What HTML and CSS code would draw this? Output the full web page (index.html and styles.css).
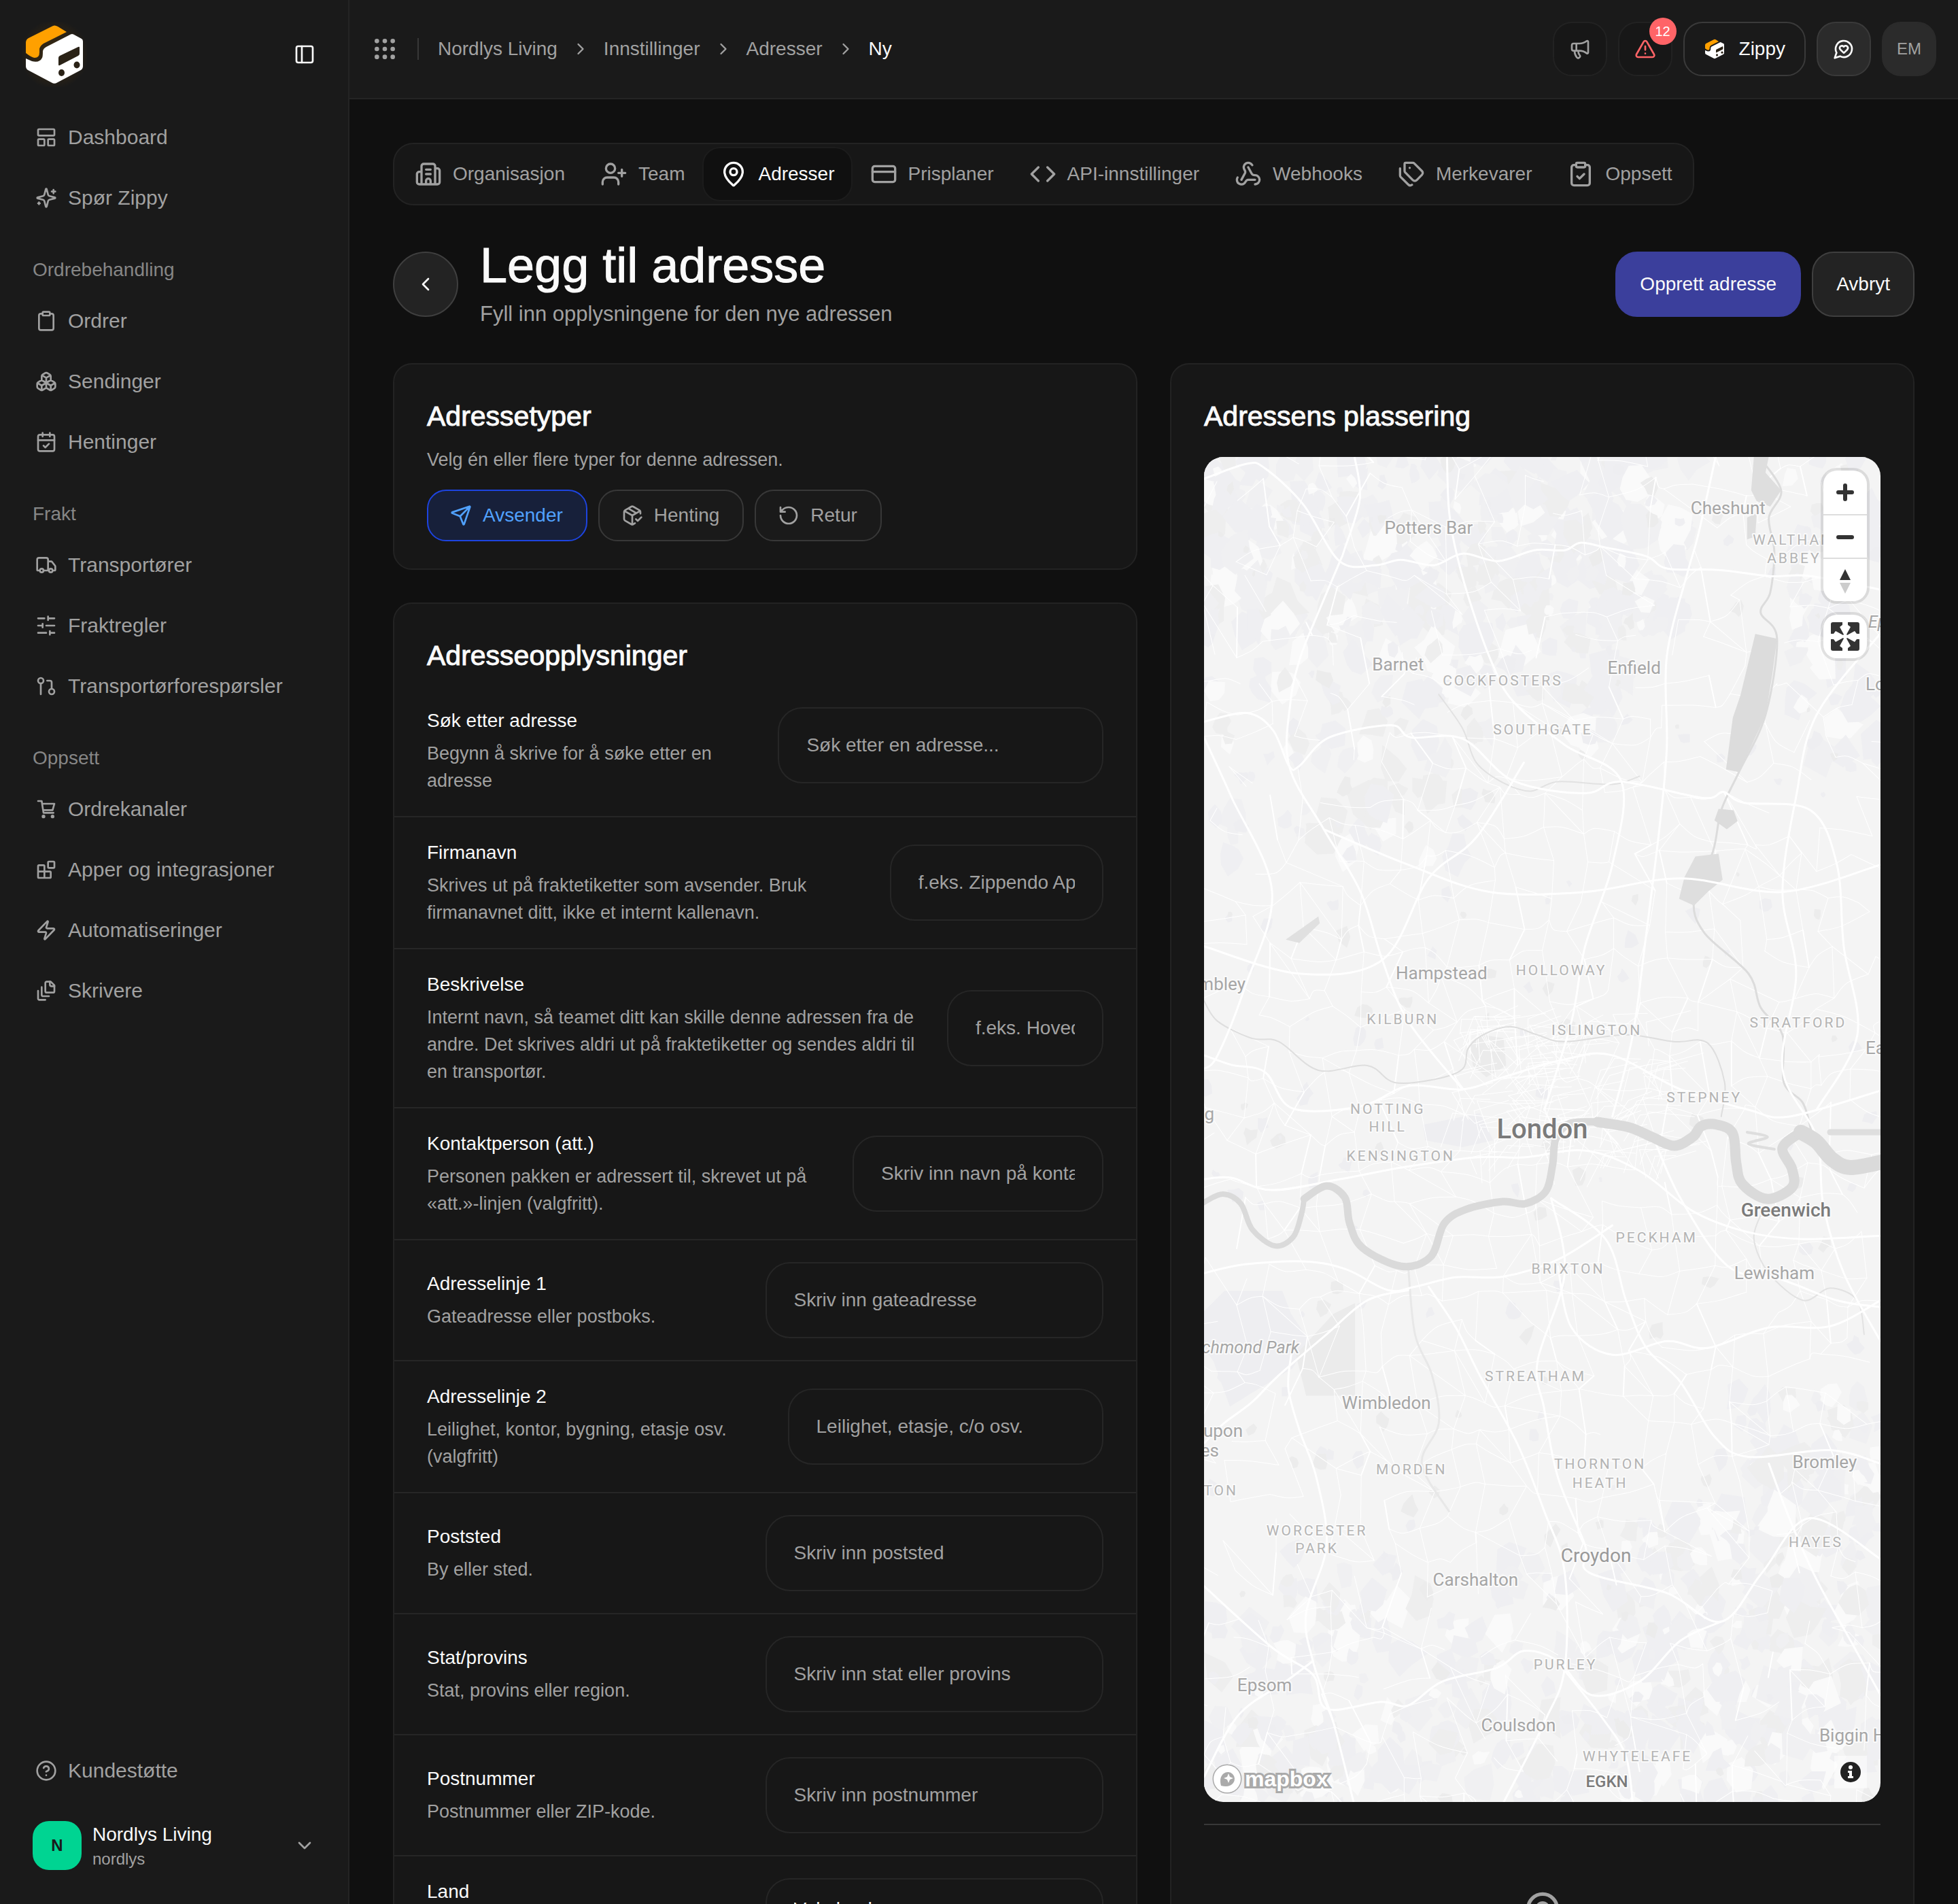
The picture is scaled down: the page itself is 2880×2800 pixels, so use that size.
FILE: index.html
```html
<!DOCTYPE html>
<html lang="nb">
<head>
    <meta charset="UTF-8">
    <meta name="viewport" content="width=device-width, initial-scale=1.0">
    <title>Legg til adresse - Zippendo</title>
    <link rel="stylesheet" href="styles.css">
</head>
<body>
    <svg class="sprite" aria-hidden="true">
        <symbol id="logo" viewBox="-6 -5 96 96">
            <path fill="#ffa000" d="M0 26Q0 21 4 19L38 2Q42-1 47 2L60 10 26 27Q20 31 20 36V40Q20 48 13 48Q9 48 0 41Z"/>
            <path fill="#fff" d="M0 49L9 53Q20 56 24 48Q25 46 25 38 26 34 30 32L66 13.500Q68 12.500 70 13.500L82 20Q84 21 84 24V60Q84 64 81 66L46 84.500Q42 87 38 84.500L3 66Q0 64 0 60Z"/>
            <path fill="#2a2216" d="M48 48Q48 46 50 45L77 32Q79 31 79 33V42Q79 44 77 45L50 59Q48 60 48 58Z"/>
            <ellipse fill="#2a2216" cx="52.500" cy="70" rx="4.500" ry="5"/>
            <ellipse fill="#2a2216" cx="75" cy="58.500" rx="4.500" ry="5"/>
        </symbol>
        <symbol id="i-panel" viewBox="0 0 24 24"><rect x="3" y="3" width="18" height="18" rx="2"/><path d="M9 3v18"/></symbol>
        <symbol id="i-dashboard" viewBox="0 0 24 24"><rect x="3" y="3" width="18" height="7" rx="1"/><rect x="3" y="14" width="7" height="7" rx="1"/><rect x="14" y="14" width="7" height="7" rx="1"/></symbol>
        <symbol id="i-sparkles" viewBox="0 0 24 24"><path d="M9.937 15.500A2 2 0 0 0 8.500 14.063l-6.135-1.582a.5.5 0 0 1 0-.962L8.500 9.936A2 2 0 0 0 9.937 8.500l1.582-6.135a.5.5 0 0 1 .963 0L14.063 8.500A2 2 0 0 0 15.500 9.937l6.135 1.581a.5.5 0 0 1 0 .964L15.500 14.063a2 2 0 0 0-1.437 1.437l-1.582 6.135a.5.5 0 0 1-.963 0z"/><path d="M20 3v4M22 5h-4M4 17v2M5 18H3"/></symbol>
        <symbol id="i-clipboard" viewBox="0 0 24 24"><rect x="8" y="2" width="8" height="4" rx="1"/><path d="M16 4h2a2 2 0 0 1 2 2v14a2 2 0 0 1-2 2H6a2 2 0 0 1-2-2V6a2 2 0 0 1 2-2h2"/></symbol>
        <symbol id="i-clipboard-check" viewBox="0 0 24 24"><rect x="8" y="2" width="8" height="4" rx="1"/><path d="M16 4h2a2 2 0 0 1 2 2v14a2 2 0 0 1-2 2H6a2 2 0 0 1-2-2V6a2 2 0 0 1 2-2h2M9 14l2 2 4-4"/></symbol>
        <symbol id="i-boxes" viewBox="0 0 24 24"><path d="M2.970 12.920A2 2 0 0 0 2 14.630v3.240a2 2 0 0 0 .97 1.710l3 1.800a2 2 0 0 0 2.060 0L12 19v-5.500l-5-3-4.030 2.420ZM7 16.500l-4.740-2.850M7 16.500l5-3M7 16.500v5.170M12 13.500V19l3.970 2.380a2 2 0 0 0 2.060 0l3-1.800a2 2 0 0 0 .97-1.710v-3.240a2 2 0 0 0-.97-1.710L17 10.500l-5 3ZM17 16.500l-5-3M17 16.500l4.740-2.850M17 16.500v5.170M7.970 4.420A2 2 0 0 0 7 6.130v4.370l5 3 5-3V6.130a2 2 0 0 0-.97-1.710l-3-1.800a2 2 0 0 0-2.060 0l-3 1.800ZM12 8L7.260 5.150M12 8l4.740-2.850M12 13.500V8"/></symbol>
        <symbol id="i-calendar" viewBox="0 0 24 24"><path d="M8 2v4M16 2v4M3 10h18M9 16l2 2 4-4"/><rect x="3" y="4" width="18" height="18" rx="2"/></symbol>
        <symbol id="i-truck" viewBox="0 0 24 24"><path d="M14 18V6a2 2 0 0 0-2-2H4a2 2 0 0 0-2 2v11a1 1 0 0 0 1 1h2M15 18H9M19 18h2a1 1 0 0 0 1-1v-3.650a1 1 0 0 0-.22-.624l-3.480-4.350A1 1 0 0 0 17.520 8H14"/><circle cx="17" cy="18" r="2"/><circle cx="7" cy="18" r="2"/></symbol>
        <symbol id="i-sliders" viewBox="0 0 24 24"><path d="M21 4h-7M10 4H3M21 12h-9M8 12H3M21 20h-5M12 20H3M14 2v4M8 10v4M16 18v4"/></symbol>
        <symbol id="i-request" viewBox="0 0 24 24"><circle cx="18" cy="18" r="3"/><circle cx="6" cy="6" r="3"/><path d="M13 6h3a2 2 0 0 1 2 2v7M6 9v12"/></symbol>
        <symbol id="i-cart" viewBox="0 0 24 24"><path d="M3 3h4l2 13h11M7.500 6H21l-2 7H8.500"/><circle cx="9" cy="20" r="1"/><circle cx="19" cy="20" r="1"/></symbol>
        <symbol id="i-blocks" viewBox="0 0 24 24"><rect x="14" y="3" width="7" height="7" rx="1"/><path d="M10 21V8a1 1 0 0 0-1-1H4a1 1 0 0 0-1 1v12a1 1 0 0 0 1 1h12a1 1 0 0 0 1-1v-5a1 1 0 0 0-1-1H3"/></symbol>
        <symbol id="i-zap" viewBox="0 0 24 24"><path d="M4 14a1 1 0 0 1-.78-1.630l9.900-10.200a.5.5 0 0 1 .86.46l-1.920 6.020A1 1 0 0 0 13 10h7a1 1 0 0 1 .78 1.630l-9.900 10.200a.5.5 0 0 1-.86-.46l1.920-6.020A1 1 0 0 0 11 14z"/></symbol>
        <symbol id="i-files" viewBox="0 0 24 24"><path d="M21 7h-3a2 2 0 0 1-2-2V2"/><path d="M21 6v6.500c0 .8-.7 1.500-1.500 1.500h-7c-.8 0-1.500-.7-1.500-1.500v-9c0-.8.7-1.500 1.500-1.500H17ZM7 8v8.800c0 .3.2.6.4.8.2.2.5.4.8.4H15M3 12v8.800c0 .3.2.6.4.8.2.2.5.4.8.4H11"/></symbol>
        <symbol id="i-help" viewBox="0 0 24 24"><circle cx="12" cy="12" r="10"/><path d="M9.090 9a3 3 0 0 1 5.830 1c0 2-3 3-3 3M12 17h.01"/></symbol>
        <symbol id="i-down" viewBox="0 0 24 24"><path d="M6 9l6 6 6-6"/></symbol>
        <symbol id="i-right" viewBox="0 0 24 24"><path d="M9 18l6-6-6-6"/></symbol>
        <symbol id="i-left" viewBox="0 0 24 24"><path d="M15 18l-6-6 6-6"/></symbol>
        <symbol id="i-grip" viewBox="0 0 24 24"><circle cx="5" cy="5" r="1"/><circle cx="12" cy="5" r="1"/><circle cx="19" cy="5" r="1"/><circle cx="5" cy="12" r="1"/><circle cx="12" cy="12" r="1"/><circle cx="19" cy="12" r="1"/><circle cx="5" cy="19" r="1"/><circle cx="12" cy="19" r="1"/><circle cx="19" cy="19" r="1"/></symbol>
        <symbol id="i-megaphone" viewBox="0 0 24 24"><path d="M11 6a13 13 0 0 0 8.400-2.800A1 1 0 0 1 21 4v12a1 1 0 0 1-1.600.8A13 13 0 0 0 11 14H5a2 2 0 0 1-2-2V8a2 2 0 0 1 2-2zM6 14a12 12 0 0 0 2.400 7.200 2 2 0 0 0 3.200-2.400A8 8 0 0 1 10 14M8 6v8"/></symbol>
        <symbol id="i-alert" viewBox="0 0 24 24"><path d="M21.730 18l-8-14a2 2 0 0 0-3.480 0l-8 14A2 2 0 0 0 4 21h16a2 2 0 0 0 1.730-3M12 9v4M12 17h.01"/></symbol>
        <symbol id="i-chat" viewBox="0 0 24 24"><path d="M7.900 20A9 9 0 1 0 4 16.100L2 22Z"/><path d="M15.800 9.200a2.500 2.500 0 0 0-3.500 0l-.3.400-.35-.3a2.420 2.420 0 1 0-3.200 3.600l3.600 3.500 3.600-3.500c1.200-1.200 1.100-2.700.2-3.700"/></symbol>
        <symbol id="i-building" viewBox="0 0 24 24"><path d="M10 12h4M10 8h4M14 21v-3a2 2 0 0 0-4 0v3M6 10H4a2 2 0 0 0-2 2v7a2 2 0 0 0 2 2h16a2 2 0 0 0 2-2V9a2 2 0 0 0-2-2h-2M6 21V5a2 2 0 0 1 2-2h8a2 2 0 0 1 2 2v16"/></symbol>
        <symbol id="i-user-plus" viewBox="0 0 24 24"><path d="M16 21v-2a4 4 0 0 0-4-4H6a4 4 0 0 0-4 4v2M19 8v6M22 11h-6"/><circle cx="9" cy="7" r="4"/></symbol>
        <symbol id="i-pin" viewBox="0 0 24 24"><path d="M20 10c0 4.993-5.539 10.193-7.399 11.799a1 1 0 0 1-1.202 0C9.539 20.193 4 14.993 4 10a8 8 0 0 1 16 0"/><circle cx="12" cy="10" r="3"/></symbol>
        <symbol id="i-card" viewBox="0 0 24 24"><rect x="2" y="5" width="20" height="14" rx="2"/><path d="M2 10h20"/></symbol>
        <symbol id="i-code" viewBox="0 0 24 24"><path d="M16 18l6-6-6-6M8 6l-6 6 6 6"/></symbol>
        <symbol id="i-webhook" viewBox="0 0 24 24"><path d="M18 16.980h-5.990c-1.100 0-1.950.94-2.480 1.900A4 4 0 0 1 2 17c.01-.7.2-1.400.57-2"/><path d="M6 17l3.130-5.780c.53-.97.1-2.180-.5-3.100a4 4 0 1 1 6.890-4.060"/><path d="M12 6l3.130 5.730C15.660 12.700 16.900 13 18 13a4 4 0 0 1 0 8"/></symbol>
        <symbol id="i-tags" viewBox="0 0 24 24"><path d="M13.172 2a2 2 0 0 1 1.414.586l6.710 6.710a2.400 2.400 0 0 1 0 3.408l-4.592 4.592a2.400 2.400 0 0 1-3.408 0l-6.710-6.710A2 2 0 0 1 6 9.172V3a1 1 0 0 1 1-1z"/><path d="M2 7v6.172a2 2 0 0 0 .586 1.414l6.710 6.710a2.400 2.400 0 0 0 3.191.193M10.500 6.500h.01"/></symbol>
        <symbol id="i-send" viewBox="0 0 24 24"><path d="M14.536 21.686a.5.5 0 0 0 .937-.024l6.500-19a.496.496 0 0 0-.635-.635l-19 6.500a.5.5 0 0 0-.024.937l7.930 3.180a2 2 0 0 1 1.112 1.110zM21.854 2.147l-10.940 10.939"/></symbol>
        <symbol id="i-package" viewBox="0 0 24 24"><path d="M16 16l2 2 4-4M21 10V8a2 2 0 0 0-1-1.730l-7-4a2 2 0 0 0-2 0l-7 4A2 2 0 0 0 3 8v8a2 2 0 0 0 1 1.730l7 4a2 2 0 0 0 2 0l2-1.140M7.500 4.270l9 5.150M3.290 7L12 12l8.710-5M12 22V12"/></symbol>
        <symbol id="i-return" viewBox="0 0 24 24"><path d="M3 12a9 9 0 1 0 9-9 9.750 9.750 0 0 0-6.740 2.740L3 8M3 3v5h5"/></symbol>
    </svg>

    <div class="app">
        <aside class="sidebar">
            <div class="sidebar-head">
                <svg class="brand"><use href="#logo"/></svg>
                <button class="toggle" aria-label="Skjul sidemeny"><svg class="icon"><use href="#i-panel"/></svg></button>
            </div>
            <nav class="nav">
                <div class="nav-group">
                    <a href="#"><svg class="icon"><use href="#i-dashboard"/></svg>Dashboard</a>
                    <a href="#"><svg class="icon"><use href="#i-sparkles"/></svg>Spør Zippy</a>
                </div>
                <div class="nav-group">
                    <h2>Ordrebehandling</h2>
                    <a href="#"><svg class="icon"><use href="#i-clipboard"/></svg>Ordrer</a>
                    <a href="#"><svg class="icon"><use href="#i-boxes"/></svg>Sendinger</a>
                    <a href="#"><svg class="icon"><use href="#i-calendar"/></svg>Hentinger</a>
                </div>
                <div class="nav-group">
                    <h2>Frakt</h2>
                    <a href="#"><svg class="icon"><use href="#i-truck"/></svg>Transportører</a>
                    <a href="#"><svg class="icon"><use href="#i-sliders"/></svg>Fraktregler</a>
                    <a href="#"><svg class="icon"><use href="#i-request"/></svg>Transportørforespørsler</a>
                </div>
                <div class="nav-group">
                    <h2>Oppsett</h2>
                    <a href="#"><svg class="icon"><use href="#i-cart"/></svg>Ordrekanaler</a>
                    <a href="#"><svg class="icon"><use href="#i-blocks"/></svg>Apper og integrasjoner</a>
                    <a href="#"><svg class="icon"><use href="#i-zap"/></svg>Automatiseringer</a>
                    <a href="#"><svg class="icon"><use href="#i-files"/></svg>Skrivere</a>
                </div>
            </nav>
            <div class="sidebar-foot">
                <div class="nav-group">
                    <a href="#"><svg class="icon"><use href="#i-help"/></svg>Kundestøtte</a>
                </div>
                <button class="account">
                    <span class="account-badge">N</span>
                    <span class="account-text">
                        <span class="account-name">Nordlys Living</span>
                        <span class="account-slug">nordlys</span>
                    </span>
                    <svg class="icon"><use href="#i-down"/></svg>
                </button>
            </div>
        </aside>

        <div class="main">
            <header class="topbar">
                <button class="apps" aria-label="Apper"><svg class="icon icon-lg"><use href="#i-grip"/></svg></button>
                <span class="divider"></span>
                <nav class="crumbs" aria-label="Brødsmuler">
                    <a href="#">Nordlys Living</a>
                    <svg class="icon icon-sm"><use href="#i-right"/></svg>
                    <a href="#">Innstillinger</a>
                    <svg class="icon icon-sm"><use href="#i-right"/></svg>
                    <a href="#">Adresser</a>
                    <svg class="icon icon-sm"><use href="#i-right"/></svg>
                    <span class="current">Ny</span>
                </nav>
                <div class="tools">
                    <button class="tool" aria-label="Nyheter"><svg class="icon"><use href="#i-megaphone"/></svg></button>
                    <button class="tool tool-alert" aria-label="Varsler"><svg class="icon"><use href="#i-alert"/></svg><span class="badge">12</span></button>
                    <button class="tool tool-zippy"><svg class="mini-logo"><use href="#logo"/></svg>Zippy</button>
                    <button class="tool tool-chat" aria-label="Tilbakemelding"><svg class="icon"><use href="#i-chat"/></svg></button>
                    <button class="tool tool-user">EM</button>
                </div>
            </header>

            <main class="content">
                <nav class="tabs" aria-label="Innstillinger">
                    <a href="#"><svg class="icon icon-lg"><use href="#i-building"/></svg>Organisasjon</a>
                    <a href="#"><svg class="icon icon-lg"><use href="#i-user-plus"/></svg>Team</a>
                    <a href="#" class="active"><svg class="icon icon-lg"><use href="#i-pin"/></svg>Adresser</a>
                    <a href="#"><svg class="icon icon-lg"><use href="#i-card"/></svg>Prisplaner</a>
                    <a href="#"><svg class="icon icon-lg"><use href="#i-code"/></svg>API-innstillinger</a>
                    <a href="#"><svg class="icon icon-lg"><use href="#i-webhook"/></svg>Webhooks</a>
                    <a href="#"><svg class="icon icon-lg"><use href="#i-tags"/></svg>Merkevarer</a>
                    <a href="#"><svg class="icon icon-lg"><use href="#i-clipboard-check"/></svg>Oppsett</a>
                </nav>

                <div class="page-head">
                    <button class="back" aria-label="Tilbake"><svg class="icon"><use href="#i-left"/></svg></button>
                    <div class="page-title">
                        <h1>Legg til adresse</h1>
                        <p>Fyll inn opplysningene for den nye adressen</p>
                    </div>
                    <div class="actions">
                        <button class="btn btn-primary">Opprett adresse</button>
                        <button class="btn">Avbryt</button>
                    </div>
                </div>

                <div class="columns">
                    <div class="column">
                        <section class="card types">
                            <h2>Adressetyper</h2>
                            <p class="hint">Velg én eller flere typer for denne adressen.</p>
                            <div class="chips">
                                <button class="chip selected" aria-pressed="true"><svg class="icon"><use href="#i-send"/></svg>Avsender</button>
                                <button class="chip" aria-pressed="false"><svg class="icon"><use href="#i-package"/></svg>Henting</button>
                                <button class="chip" aria-pressed="false"><svg class="icon"><use href="#i-return"/></svg>Retur</button>
                            </div>
                        </section>

                        <section class="card details">
                            <h2>Adresseopplysninger</h2>
                            <form class="fields">
                                <div class="field field-top">
                                    <div class="field-text">
                                        <label for="search">Søk etter adresse</label>
                                        <p class="hint">Begynn å skrive for å søke etter en adresse</p>
                                    </div>
                                    <div class="control"><input type="text" id="search" placeholder="Søk etter en adresse..."></div>
                                </div>
                                <div class="field">
                                    <div class="field-text">
                                        <label for="company">Firmanavn</label>
                                        <p class="hint">Skrives ut på fraktetiketter som avsender. Bruk firmanavnet ditt, ikke et internt kallenavn.</p>
                                    </div>
                                    <div class="control"><input type="text" id="company" placeholder="f.eks. Zippendo ApS"></div>
                                </div>
                                <div class="field">
                                    <div class="field-text">
                                        <label for="description">Beskrivelse</label>
                                        <p class="hint">Internt navn, så teamet ditt kan skille denne adressen fra de andre. Det skrives aldri ut på fraktetiketter og sendes aldri til en transportør.</p>
                                    </div>
                                    <div class="control"><input type="text" id="description" placeholder="f.eks. Hovedlager"></div>
                                </div>
                                <div class="field">
                                    <div class="field-text">
                                        <label for="contact">Kontaktperson (att.)</label>
                                        <p class="hint">Personen pakken er adressert til, skrevet ut på «att.»-linjen (valgfritt).</p>
                                    </div>
                                    <div class="control"><input type="text" id="contact" placeholder="Skriv inn navn på kontaktperson"></div>
                                </div>
                                <div class="field">
                                    <div class="field-text">
                                        <label for="line1">Adresselinje 1</label>
                                        <p class="hint">Gateadresse eller postboks.</p>
                                    </div>
                                    <div class="control"><input type="text" id="line1" placeholder="Skriv inn gateadresse"></div>
                                </div>
                                <div class="field">
                                    <div class="field-text">
                                        <label for="line2">Adresselinje 2</label>
                                        <p class="hint">Leilighet, kontor, bygning, etasje osv. (valgfritt)</p>
                                    </div>
                                    <div class="control"><input type="text" id="line2" placeholder="Leilighet, etasje, c/o osv."></div>
                                </div>
                                <div class="field">
                                    <div class="field-text">
                                        <label for="city">Poststed</label>
                                        <p class="hint">By eller sted.</p>
                                    </div>
                                    <div class="control"><input type="text" id="city" placeholder="Skriv inn poststed"></div>
                                </div>
                                <div class="field">
                                    <div class="field-text">
                                        <label for="state">Stat/provins</label>
                                        <p class="hint">Stat, provins eller region.</p>
                                    </div>
                                    <div class="control"><input type="text" id="state" placeholder="Skriv inn stat eller provins"></div>
                                </div>
                                <div class="field">
                                    <div class="field-text">
                                        <label for="zip">Postnummer</label>
                                        <p class="hint">Postnummer eller ZIP-kode.</p>
                                    </div>
                                    <div class="control"><input type="text" id="zip" placeholder="Skriv inn postnummer"></div>
                                </div>
                                <div class="field field-top">
                                    <div class="field-text">
                                        <label for="country">Land</label>
                                    </div>
                                    <div class="control"><select id="country"><option>Velg land</option></select></div>
                                </div>
                            </form>
                        </section>
                    </div>

                    <section class="card location">
                        <h2>Adressens plassering</h2>
                        <div class="map">
                            <svg class="map-canvas" viewBox="0 0 994 1978" preserveAspectRatio="xMidYMid slice">
                                <g id="terrain"></g>
                                <g class="town">
                                    <text x="770" y="85">Cheshunt</text>
                                    <text x="330" y="114">Potters Bar</text>
                                    <text x="285" y="315">Barnet</text>
                                    <text x="632" y="320">Enfield</text>
                                    <text x="349" y="768">Hampstead</text>
                                    <text class="end" x="61" y="784">Wembley</text>
                                    <text class="end" x="15" y="975">Ealing</text>
                                    <text x="838" y="1209">Lewisham</text>
                                    <text x="268" y="1400">Wimbledon</text>
                                    <text class="end" x="57" y="1441">Kingston upon</text>
                                    <text class="end" x="22" y="1470">Thames</text>
                                    <text x="912" y="1487">Bromley</text>
                                    <text x="399" y="1659">Carshalton</text>
                                    <text x="89" y="1814">Epsom</text>
                                    <text x="462" y="1873">Coulsdon</text>
                                    <text class="start" x="904" y="1888">Biggin Hill</text>
                                    <text class="start" x="972" y="344">Loughton</text>
                                    <text class="start" x="972" y="878">East Ham</text>
                                </g>
                                <g class="park">
                                    <text class="start" x="976" y="252">Epping</text>
                                    <text class="end" x="140" y="1318">Richmond Park</text>
                                </g>
                                <g class="suburb">
                                    <text x="867" y="130">WALTHAM</text>
                                    <text x="867" y="157">ABBEY</text>
                                    <text x="439" y="337">COCKFOSTERS</text>
                                    <text x="498" y="409">SOUTHGATE</text>
                                    <text x="525" y="762">HOLLOWAY</text>
                                    <text x="292" y="834">KILBURN</text>
                                    <text x="577" y="850">ISLINGTON</text>
                                    <text x="873" y="839">STRATFORD</text>
                                    <text x="735" y="949">STEPNEY</text>
                                    <text x="270" y="966">NOTTING</text>
                                    <text x="270" y="992">HILL</text>
                                    <text x="289" y="1035">KENSINGTON</text>
                                    <text x="665" y="1155">PECKHAM</text>
                                    <text x="535" y="1201">BRIXTON</text>
                                    <text x="487" y="1359">STREATHAM</text>
                                    <text x="305" y="1495">MORDEN</text>
                                    <text x="582" y="1488">THORNTON</text>
                                    <text x="582" y="1515">HEATH</text>
                                    <text class="end" x="50" y="1526">SURBITON</text>
                                    <text x="166" y="1585">WORCESTER</text>
                                    <text x="166" y="1611">PARK</text>
                                    <text x="899" y="1602">HAYES</text>
                                    <text x="531" y="1782">PURLEY</text>
                                    <text x="637" y="1917">WHYTELEAFE</text>
                                </g>
                                <g class="borough">
                                    <text class="mid" x="576" y="1624">Croydon</text>
                                    <text x="855" y="1117">Greenwich</text>
                                    <text class="code" x="592" y="1955">EGKN</text>
                                    <text class="city" x="497" y="1002">London</text>
                                </g>
                            </svg>
                            <div class="map-controls">
                                <div class="map-group">
                                    <button aria-label="Zoom inn"><svg viewBox="0 0 64 64"><path class="bar" d="M32 22v20M22 32h20"/></svg></button>
                                    <button aria-label="Zoom ut"><svg viewBox="0 0 64 64"><path class="bar" d="M22 32h20"/></svg></button>
                                    <button aria-label="Nord opp"><svg viewBox="0 0 64 64"><path d="M32 15l8 16H24z" fill="#333"/><path d="M32 51l8-16H24z" fill="#ccc"/></svg></button>
                                </div>
                                <div class="map-group">
                                    <button aria-label="Fullskjerm"><svg viewBox="0 0 64 64"><g fill="#333"><path d="M11 14q0-3 3-3h14v4l-4 3 6 11-1 1-11-6-3 4h-4z"/><path d="M53 14q0-3-3-3H36v4l4 3-6 11 1 1 11-6 3 4h4z"/><path d="M11 50q0 3 3 3h14v-4l-4-3 6-11-1-1-11 6-3-4h-4z"/><path d="M53 50q0 3-3 3H36v-4l4-3-6-11 1-1 11 6 3-4h4z"/></g></svg></button>
                                </div>
                            </div>
                            <a class="mapbox" href="#">
                                <svg viewBox="0 0 44 44"><circle cx="22" cy="22" r="20" fill="#fff" stroke="#aaa" stroke-width="3"/><path d="M13 32c-2-8-1-14 4-18a10 10 0 0 1 14 14c-4 5-10 6-18 4z" fill="#aaa"/><path d="M24 14l2 5 5 2-5 2-2 5-2-5-5-2 5-2z" fill="#fff"/></svg>
                                <span>mapbox</span>
                            </a>
                            <button class="map-info" aria-label="Kartinformasjon"><svg viewBox="0 0 30 30"><circle cx="15" cy="15" r="15" fill="#222"/><circle cx="15" cy="8" r="3" fill="#fff"/><path d="M11 13h6v8h2v3h-8v-3h2v-5h-2z" fill="#fff"/></svg></button>
                        </div>
                        <hr>
                        <div class="empty"><svg class="icon"><use href="#i-pin"/></svg></div>
                    </section>
                </div>
            </main>
        </div>
    </div>
    <script src="map.js"></script>
</body>
</html>
```
FILE: styles.css
```css
* {
    box-sizing: border-box;
}
body {
    margin: 0;
    background: #101010;
    color: #fafafa;
    font-family: "Liberation Sans", Arial, sans-serif;
    font-size: 28px;
    line-height: 40px;
}
h1, h2, p {
    margin: 0;
    font-weight: normal;
}
a {
    color: inherit;
    text-decoration: none;
}
button, input, select {
    font: inherit;
    color: inherit;
    background: none;
    border: 0;
    padding: 0;
}
button {
    cursor: pointer;
}
.sprite {
    display: none;
}
.icon {
    display: block;
    flex: none;
    width: 32px;
    height: 32px;
    fill: none;
    stroke: currentColor;
    stroke-width: 2;
    stroke-linecap: round;
    stroke-linejoin: round;
}
.icon-sm {
    width: 28px;
    height: 28px;
}
.icon-lg {
    width: 40px;
    height: 40px;
}
.app {
    display: flex;
    height: 100vh;
    overflow: hidden;
}

/* sidebar */
.sidebar {
    flex: none;
    display: flex;
    flex-direction: column;
    width: 514px;
    background: #1a1a1a;
    border-right: 2px solid #242424;
}
.sidebar-head {
    display: flex;
    align-items: center;
    justify-content: space-between;
    padding: 32px 48px 30px 32px;
}
.brand {
    width: 96px;
    height: 96px;
    background: radial-gradient(circle, #3a2a10, #2a2216 50%, #1a1a1a 75%);
}
.nav {
    flex: 1;
    display: flex;
    flex-direction: column;
    gap: 31px;
}
.nav-group {
    display: flex;
    flex-direction: column;
    gap: 1px;
    padding: 0 32px;
    color: #a1a1a1;
}
.nav-group h2 {
    height: 61px;
    padding-left: 16px;
    font-size: 28px;
    line-height: 61px;
    color: #868686;
}
.nav-group a {
    display: flex;
    align-items: center;
    gap: 16px;
    height: 88px;
    padding: 0 20px;
    font-size: 30px;
}
.sidebar-foot {
    padding-bottom: 50px;
}
.account {
    display: flex;
    align-items: center;
    gap: 16px;
    width: 100%;
    padding: 30px 48px 0;
    text-align: left;
}
.account-badge {
    width: 72px;
    height: 72px;
    border-radius: 24px;
    background: #00d492;
    color: #1a1a1a;
    font-size: 24px;
    font-weight: bold;
    line-height: 72px;
    text-align: center;
}
.account-text {
    flex: 1;
    display: flex;
    flex-direction: column;
}
.account-slug {
    font-size: 24px;
    line-height: 32px;
    color: #a1a1a1;
}
.account .icon {
    color: #a1a1a1;
}

/* top bar */
.main {
    flex: 1;
    min-width: 0;
    display: flex;
    flex-direction: column;
}
.topbar {
    flex: none;
    display: flex;
    align-items: center;
    gap: 28px;
    padding: 32px;
    background: #1a1a1a;
    border-bottom: 2px solid #242424;
}
.apps {
    color: #a1a1a1;
}
.divider {
    width: 2px;
    height: 32px;
    background: #383838;
}
.crumbs {
    flex: 1;
    display: flex;
    align-items: center;
    gap: 20px;
    color: #a1a1a1;
}
.crumbs .current {
    color: #fafafa;
}
.tools {
    display: flex;
    gap: 16px;
}
.tool {
    position: relative;
    display: flex;
    align-items: center;
    justify-content: center;
    min-width: 80px;
    height: 80px;
    border: 2px solid #222;
    border-radius: 28px;
    background: #171717;
    color: #a1a1a1;
}
.tool-alert {
    color: #ff6467;
}
.badge {
    position: absolute;
    top: -8px;
    right: -8px;
    width: 40px;
    height: 40px;
    border-radius: 50%;
    background: #ff6467;
    color: #fff;
    font-size: 20px;
}
.tool-zippy {
    gap: 20px;
    padding: 0 28px;
    background: #1a1a1a;
    border-color: #3a3a3a;
    color: #fafafa;
}
.mini-logo {
    width: 32px;
    height: 32px;
}
.tool-chat {
    background: #2b2b2b;
    border-color: #3a3a3a;
    color: #fafafa;
}
.tool-user {
    background: #2b2b2b;
    border-color: #2b2b2b;
    font-size: 24px;
}

/* page */
.content {
    flex: 1;
    min-height: 0;
    padding: 64px;
    overflow: hidden;
}
.tabs {
    display: flex;
    width: fit-content;
    padding: 4px;
    border: 2px solid #232323;
    border-radius: 30px;
    background: #171717;
    color: #a1a1a1;
}
.tabs a {
    display: flex;
    align-items: center;
    gap: 16px;
    height: 80px;
    padding: 0 24px;
    border: 2px solid transparent;
    border-radius: 26px;
}
.tabs .active {
    background: #101010;
    border-color: #1c1c1c;
    color: #fafafa;
}
.page-head {
    display: flex;
    align-items: center;
    gap: 32px;
    margin: 48px 0;
}
.back {
    display: flex;
    align-items: center;
    justify-content: center;
    width: 96px;
    height: 96px;
    border: 2px solid #3f3f3f;
    border-radius: 50%;
    background: #232323;
}
.page-title {
    flex: 1;
}
.page-title h1 {
    font-size: 72px;
    line-height: 80px;
    -webkit-text-stroke: 1px currentColor;
}
.page-title p {
    margin-top: 8px;
    font-size: 31px;
    line-height: 48px;
    color: #a1a1a1;
}
.actions {
    display: flex;
    gap: 16px;
}
.btn {
    height: 96px;
    padding: 0 34px;
    border: 2px solid #3f3f3f;
    border-radius: 32px;
    background: #232323;
}
.btn-primary {
    background: #3b3f9c;
    border-color: #3b3f9c;
}
.columns {
    display: grid;
    grid-template-columns: 1fr 1fr;
    gap: 48px;
}
.column {
    display: flex;
    flex-direction: column;
    gap: 48px;
    min-width: 0;
}
.card {
    padding: 48px 48px 40px;
    border: 2px solid #232323;
    border-radius: 28px;
    background: #171717;
}
.card h2 {
    font-size: 41px;
    line-height: 56px;
    -webkit-text-stroke: 1px currentColor;
}
.hint {
    font-size: 27px;
    color: #a1a1a1;
}
.types .hint {
    margin: 16px 0 24px;
}
.chips {
    display: flex;
    gap: 16px;
}
.chip {
    display: flex;
    align-items: center;
    gap: 16px;
    height: 76px;
    padding: 0 34px 0 32px;
    border: 2px solid #383838;
    border-radius: 28px;
    background: #1a1a1a;
    color: #a1a1a1;
}
.chip.selected {
    border-color: #1d44e0;
    background: #17203a;
    color: #51a2ff;
}

/* form rows */
.details {
    padding: 48px 0;
}
.details h2 {
    padding: 0 48px;
    margin-bottom: 16px;
}
.field {
    display: flex;
    align-items: center;
    padding: 32px 48px;
    border-bottom: 2px solid #262626;
}
.field-top {
    align-items: flex-start;
}
.field-text {
    flex: 0 1 auto;
    min-width: 0;
    margin-right: auto;
    padding-right: 14px;
}
.field label {
    display: block;
    margin-bottom: 8px;
}
.control {
    flex: 0 1 50%;
    min-width: 0;
}
.control input, .control select {
    display: block;
    width: 100%;
    height: 112px;
    padding: 0 40px;
    border: 2px solid #262626;
    border-radius: 36px;
    background: #171717;
}
.control select {
    height: 92px;
    appearance: none;
}
.control input::placeholder {
    color: #a1a1a1;
    opacity: 1;
}

/* map */
.map {
    position: relative;
    height: 1978px;
    margin-top: 32px;
    border-radius: 28px;
    background: #f4f4f4;
    overflow: hidden;
}
.map-canvas {
    display: block;
    width: 100%;
    height: 100%;
    font-family: Roboto, sans-serif;
}
.map-canvas text {
    text-anchor: middle;
    paint-order: stroke;
    stroke: #fafafa;
    stroke-width: 4px;
    stroke-linejoin: round;
}
.map-canvas .start {
    text-anchor: start;
}
.map-canvas .end {
    text-anchor: end;
}
.town {
    font-size: 26px;
    fill: #a6a6a6;
}
.park {
    font-size: 25px;
    font-style: italic;
    fill: #a6a6a6;
}
.suburb {
    font-size: 21px;
    letter-spacing: 3px;
    fill: #b4b4b4;
}
.borough {
    font-size: 28px;
    font-weight: 500;
    fill: #7a7a7a;
}
.borough .mid {
    font-weight: 400;
    fill: #999;
}
.borough .code {
    font-size: 24px;
}
.borough .city {
    font-size: 40px;
}
.map-controls {
    position: absolute;
    top: 20px;
    right: 20px;
    display: flex;
    flex-direction: column;
    gap: 20px;
}
.map-group {
    border-radius: 20px;
    background: #fff;
    box-shadow: 0 0 0 4px rgba(0, 0, 0, 0.1);
    overflow: hidden;
}
.map-group button {
    display: block;
    width: 64px;
    height: 64px;
}
.map-group button + button {
    border-top: 2px solid #ddd;
}
.map-group svg {
    display: block;
    width: 64px;
}
.bar {
    stroke: #333;
    stroke-width: 6;
    stroke-linecap: round;
}
.mapbox {
    position: absolute;
    bottom: 12px;
    left: 12px;
    display: flex;
    align-items: center;
    gap: 4px;
    color: #fff;
    font-size: 32px;
    font-weight: bold;
    -webkit-text-stroke: 6px #aaa;
    paint-order: stroke;
}
.mapbox svg {
    width: 44px;
    height: 44px;
}
.map-info {
    position: absolute;
    right: 20px;
    bottom: 20px;
    display: flex;
    align-items: center;
    justify-content: center;
    width: 48px;
    height: 48px;
    background: rgba(255, 255, 255, 0.5);
}
.map-info svg {
    width: 30px;
    height: 30px;
}
.location hr {
    height: 2px;
    margin: 32px 0 96px;
    border: 0;
    background: #383838;
}
.empty {
    display: flex;
    justify-content: center;
    color: #a1a1a1;
}
.empty .icon {
    width: 64px;
    height: 64px;
}
```
FILE: map.js
```js
// Draws the base layer of the map: fields, parks, roads and water
const terrain = document.getElementById('terrain');
let seed = 7;

function random() {
    seed = (seed * 16807) % 2147483647;
    return seed / 2147483647;
}

function between(a, b) {
    return a + random() * (b - a);
}

function smooth(points) {
    let d = `M${points[0][0]} ${points[0][1]}`;
    for (let i = 0; i < points.length - 1; i++) {
        const p0 = points[i - 1] || points[i];
        const p1 = points[i];
        const p2 = points[i + 1];
        const p3 = points[i + 2] || p2;
        d += `C${p1[0] + (p2[0] - p0[0]) / 6} ${p1[1] + (p2[1] - p0[1]) / 6} ${p2[0] - (p3[0] - p1[0]) / 6} ${p2[1] - (p3[1] - p1[1]) / 6} ${p2[0]} ${p2[1]}`;
    }
    return d;
}

function add(d, attrs) {
    const path = document.createElementNS('http://www.w3.org/2000/svg', 'path');
    path.setAttribute('d', d);
    path.setAttribute('fill', 'none');
    path.setAttribute('stroke-linejoin', 'round');
    path.setAttribute('stroke-linecap', 'round');
    for (const key in attrs) path.setAttribute(key, attrs[key]);
    terrain.appendChild(path);
}

function line(points, color, width) {
    add(smooth(points), { stroke: color, 'stroke-width': width });
}

function area(points, color) {
    add('M' + points.join('L') + 'Z', { fill: color });
}

function patch(x, y, size, color) {
    const n = 5 + Math.floor(random() * 5);
    const turn = random() * 6;
    const points = [];
    for (let i = 0; i < n; i++) {
        const a = turn + i / n * Math.PI * 2;
        const r = size * between(0.4, 1);
        points.push([Math.round(x + Math.cos(a) * r), Math.round(y + Math.sin(a) * r * 1.2)]);
    }
    area(points, color);
}

// countryside in the north and south, x, y, width, height, count
const fields = [
    [0, 0, 720, 260, 300], [0, 240, 620, 180, 90], [0, 420, 380, 180, 40],
    [860, 0, 134, 460, 70], [600, 1560, 394, 418, 230], [0, 1700, 600, 278, 160],
    [780, 1380, 214, 200, 50], [100, 1600, 500, 120, 30]
];
for (const [x, y, w, h, count] of fields) {
    for (let i = 0; i < count; i++) {
        const color = ['#efeff2', '#fafafa', '#efeff2', '#eeeeee', '#f0f0f2'][Math.floor(random() * 5)];
        patch(x + random() * w, y + random() * h, between(8, 36), color);
    }
}
for (let i = 0; i < 220; i++) {
    patch(random() * 994, random() * 1978, between(4, 17), random() < 0.6 ? '#eeeef1' : '#ececec');
}

// Richmond Park, Wimbledon Common, Hyde Park, Regent's Park
area([[0, 1256], [30, 1226], [115, 1226], [128, 1260], [155, 1300], [130, 1340], [80, 1370], [38, 1396], [14, 1330], [0, 1310]], '#eeeef1');
area([[190, 1260], [222, 1244], [222, 1380], [150, 1380], [135, 1320]], '#ebebeb');
area([[322, 982], [405, 965], [425, 1005], [380, 1015], [325, 1005]], '#eeeef1');
area([[390, 865], [410, 850], [440, 855], [444, 895], [415, 912], [395, 895]], '#ebebeb');

// minor streets follow a loose grid, each node moved a little
const step = 46;
const nodes = [];
for (let y = -1; y * step < 2030; y++) {
    nodes.push([]);
    for (let x = -1; x * step < 1050; x++) {
        nodes[y + 1].push([Math.round(x * step + between(-21, 21)), Math.round(y * step + between(-21, 21))]);
    }
}
for (let r = 0; r < nodes.length - 1; r++) {
    for (let c = 0; c < nodes[r].length - 1; c++) {
        const [x, y] = nodes[r][c];
        const near = Math.hypot(x - 500, (y - 1000) * 0.7);
        const chance = near < 450 ? 0.85 : 0.5;
        const bend = [(x + nodes[r][c + 1][0]) / 2 + between(-7, 7), (y + nodes[r][c + 1][1]) / 2 + between(-7, 7)];
        if (random() < chance) line([[x, y], bend, nodes[r][c + 1]], '#fff', 1);
        if (random() < chance) line([[x, y], nodes[r + 1][c]], '#fff', random() < 0.2 ? 2 : 1);
        if (random() < 0.15) line([[x, y], nodes[r + 1][c + 1]], '#fff', 1);
    }
}
for (let i = 0; i < 130; i++) {
    const x = between(360, 680);
    const y = between(820, 1040);
    line([[x, y], [x + between(-30, 30), y + between(20, 50)]], '#fff', 1);
    line([[x, y], [x + between(30, 70), y + between(-20, 8)]], '#fff', 1);
}

// River Lea and canals
line([[815, 0], [848, 50], [830, 90], [838, 140], [832, 200], [818, 230], [842, 268], [825, 380], [786, 464], [760, 520], [748, 580], [720, 650], [735, 700], [800, 760], [818, 810], [850, 850], [852, 920], [880, 950], [892, 990]], '#dcdcdc', 3);
line([[0, 800], [20, 830], [70, 855], [110, 860], [168, 902], [240, 895], [280, 920], [340, 915], [380, 900], [388, 870], [410, 850], [450, 838], [490, 850], [530, 860], [620, 850], [690, 860], [740, 862], [765, 920], [760, 970]], '#dedede', 2);
line([[345, 350], [380, 400], [400, 450], [440, 480], [480, 492], [520, 478], [600, 482], [640, 470]], '#e2e2e2', 2);
line([[300, 1190], [310, 1290], [335, 1350], [345, 1420], [320, 1480], [360, 1550]], '#e8e8e8', 3);
line([[820, 1110], [808, 1150], [830, 1200], [880, 1240], [920, 1222], [960, 1240], [970, 1290]], '#e2e2e2', 2);
area([[810, 261], [842, 268], [835, 321], [825, 381], [786, 464], [767, 460], [777, 384], [788, 352]], '#dcdcdc');
area([[808, 0], [830, 0], [825, 24], [848, 50], [832, 74], [812, 66], [804, 50]], '#dedede');
area([[798, 90], [812, 84], [810, 118], [798, 122]], '#dedede');
area([[750, 535], [756, 518], [778, 520], [784, 536], [768, 548]], '#dcdcdc');
area([[722, 588], [756, 584], [762, 622], [740, 640], [720, 660], [698, 650], [706, 618]], '#dedede');
area([[120, 710], [168, 676], [170, 686], [140, 715]], '#e0e0e0');

// main roads
const roads = [
    [[0, 33], [63, 11], [90, 18], [146, 71], [199, 154], [252, 160], [289, 152], [338, 160], [380, 143], [432, 154], [485, 138], [530, 138], [553, 127], [590, 134], [650, 147], [681, 165], [756, 167], [831, 176], [891, 176], [994, 196]],
    [[221, 0], [229, 62], [206, 138], [199, 156], [169, 227], [142, 294], [127, 361], [125, 455], [176, 548], [230, 640], [262, 740], [300, 830], [380, 930]],
    [[0, 390], [63, 377], [101, 402], [125, 455], [140, 455], [184, 413], [274, 395], [304, 413], [380, 415], [455, 477], [560, 495], [613, 478], [733, 502], [763, 493], [793, 509], [891, 520], [930, 600], [940, 720], [960, 850], [900, 960]],
    [[357, 0], [360, 80], [372, 147], [395, 227], [425, 308], [455, 361], [530, 424], [613, 477], [600, 600], [560, 720], [540, 830], [500, 960]],
    [[752, 0], [726, 116], [711, 169], [680, 294], [680, 428], [669, 548], [650, 700], [630, 850], [600, 970]],
    [[0, 413], [40, 500], [100, 640], [60, 780], [20, 880], [0, 900]],
    [[0, 880], [40, 894], [90, 905], [130, 958], [230, 955], [300, 925], [380, 930], [440, 912], [530, 886], [600, 880], [700, 930], [800, 960], [860, 970], [994, 932]],
    [[0, 1062], [40, 1060], [100, 1078], [200, 1062], [290, 1045], [400, 1030], [470, 1030], [560, 1020], [640, 1050], [720, 1110], [800, 1140], [880, 1150], [994, 1145]],
    [[0, 1200], [60, 1187], [150, 1183], [210, 1195], [270, 1225], [310, 1220], [370, 1206], [440, 1205], [520, 1180], [600, 1130]],
    [[300, 1225], [240, 1240], [180, 1290], [110, 1350], [70, 1390], [30, 1420], [0, 1450]],
    [[128, 1320], [124, 1370], [140, 1430], [165, 1500], [180, 1600], [150, 1700], [160, 1770], [190, 1860], [220, 1978]],
    [[330, 1220], [370, 1280], [405, 1350], [460, 1450], [500, 1550], [530, 1640], [530, 1780], [500, 1860], [440, 1978]],
    [[510, 1090], [530, 1200], [490, 1330], [500, 1400], [520, 1500], [560, 1600], [566, 1640], [680, 1670], [760, 1712], [820, 1640], [890, 1560], [994, 1620]],
    [[510, 1090], [590, 1150], [620, 1240], [650, 1310], [700, 1360], [750, 1440], [800, 1470], [920, 1460], [994, 1480]],
    [[520, 1190], [540, 1280], [600, 1320], [680, 1300], [740, 1310], [830, 1280], [920, 1278], [994, 1240]],
    [[660, 1000], [700, 1090], [770, 1190], [850, 1210], [930, 1240], [994, 1250]],
    [[0, 1660], [100, 1750], [160, 1790], [180, 1840], [260, 1830], [300, 1835], [350, 1800], [430, 1780], [470, 1755], [520, 1770], [570, 1820], [640, 1800], [700, 1740], [760, 1712]],
    [[994, 1820], [950, 1740], [900, 1650], [860, 1560], [830, 1480]],
    [[0, 1940], [50, 1850], [120, 1800], [160, 1770]],
    [[531, 1785], [590, 1860], [620, 1910], [630, 1978]],
    [[470, 450], [400, 560], [330, 620], [262, 740], [140, 760], [0, 720]],
    [[994, 260], [900, 380], [870, 500], [850, 640], [870, 760], [850, 900], [900, 1000], [910, 1100], [940, 1200], [994, 1300]],
    [[176, 548], [300, 600], [420, 640], [560, 640], [700, 620], [850, 640], [994, 600]]
];
for (const road of roads) line(road, '#fff', 3);

// Thames, wider towards the east
line([[-10, 1104], [0, 1096], [28, 1084], [54, 1098], [71, 1136], [104, 1160], [131, 1147], [143, 1114], [147, 1091]], '#dadada', 8);
line([[147, 1091], [180, 1072], [207, 1089], [214, 1127], [233, 1163], [290, 1190], [333, 1176], [353, 1127], [386, 1106], [439, 1095], [472, 1098], [502, 1080], [512, 1042], [517, 1002], [538, 980], [578, 978]], '#dadada', 11);
line([[578, 978], [625, 986], [658, 1000], [691, 1013], [718, 1000], [731, 984], [754, 982], [777, 995], [782, 1038], [791, 1069], [827, 1091], [864, 1074], [864, 1047], [850, 1016], [877, 993]], '#dadada', 15);
line([[877, 993], [900, 1007], [923, 1033], [950, 1045], [1000, 1036]], '#dadada', 22);
line([[920, 993], [994, 993]], '#dedede', 9);
line([[798, 993], [828, 1000], [800, 1010], [838, 1018]], '#dedede', 4);
```
